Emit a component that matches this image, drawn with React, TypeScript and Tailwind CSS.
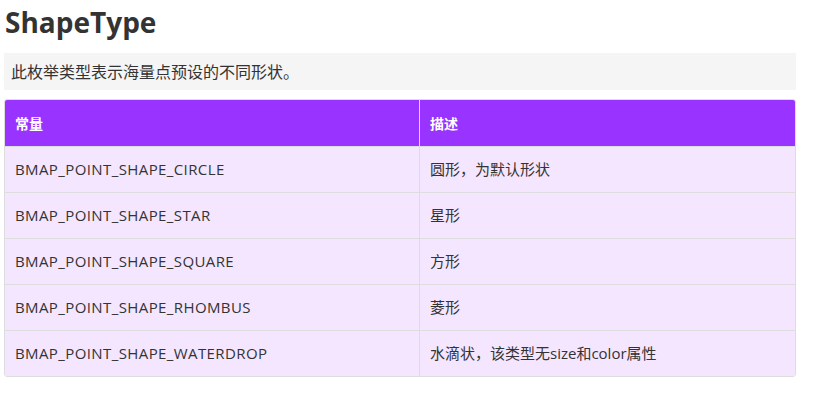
const rows = [
  ['BMAP_POINT_SHAPE_CIRCLE', '圆形，为默认形状'],
  ['BMAP_POINT_SHAPE_STAR', '星形'],
  ['BMAP_POINT_SHAPE_SQUARE', '方形'],
  ['BMAP_POINT_SHAPE_RHOMBUS', '菱形'],
  ['BMAP_POINT_SHAPE_WATERDROP', '水滴状，该类型无size和color属性'],
];

export default function App() {
  return (
    <div className="w-[822px] h-[394px] bg-white text-[#333] font-['Open_Sans','Noto_Sans_CJK_SC',sans-serif] pl-[4px] pr-[26px]">
      <h1 className="text-[28px] font-bold leading-[40px] pt-[2px] pl-[1px] m-0">ShapeType</h1>
      <div className="mt-[11px] bg-[#f5f5f5] h-[37px] flex items-center pl-[7px] text-[16px]">
        此枚举类型表示海量点预设的不同形状。
      </div>
      <div className="mt-[9px] border border-[#ddd] rounded-[3px] overflow-hidden text-[15px]">
        <div className="grid grid-cols-[415px_1fr] bg-[#9933ff] text-white font-bold h-[46px] text-[14px]">
          <div className="flex items-center pl-[10px] border-r border-[#ddd]">常量</div>
          <div className="flex items-center pl-[10px]">描述</div>
        </div>
        {rows.map(([k, v], i) => (
          <div
            key={i}
            className="grid grid-cols-[415px_1fr] bg-[#f5e6ff] h-[46px] border-t border-[#ddd]"
          >
            <div className="flex items-center pl-[10px] border-r border-[#ddd] tracking-[0.4px]">{k}</div>
            <div className="flex items-center pl-[10px]">{v}</div>
          </div>
        ))}
      </div>
    </div>
  );
}
